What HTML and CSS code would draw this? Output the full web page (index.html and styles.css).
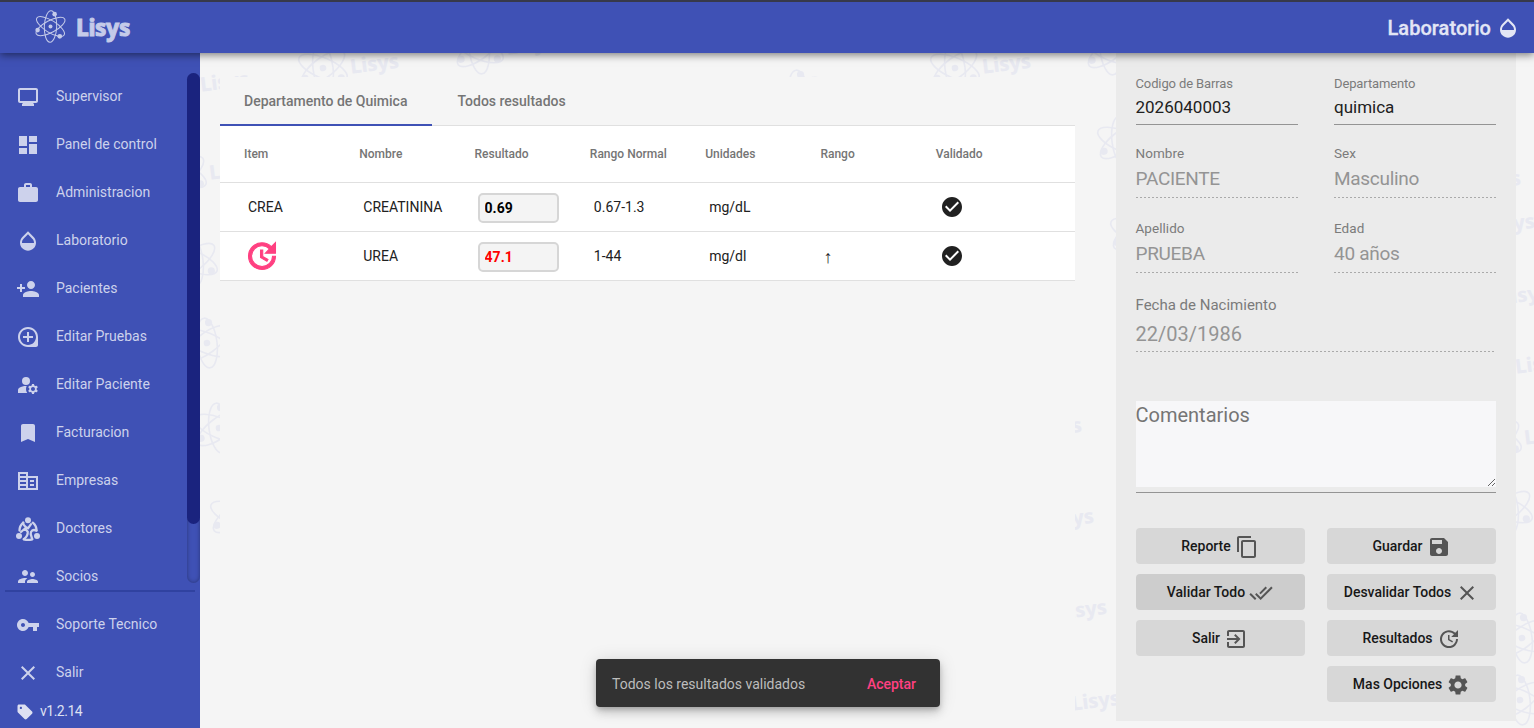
FILE: index.html
```html
<!DOCTYPE html>
<html lang="es">
<head>
<meta charset="utf-8">
<title>Lisys - Laboratorio</title>
<link rel="stylesheet" href="styles.css">
</head>
<body>
<svg class="defs" width="0" height="0" aria-hidden="true">
  <symbol id="atom" viewBox="-16 -16 32 32">
    <g fill="none" stroke="currentColor" stroke-width="1">
      <ellipse rx="6" ry="15.3" transform="rotate(2)"/>
      <ellipse rx="5.8" ry="15.6" transform="rotate(62)"/>
      <ellipse rx="5.8" ry="15.6" transform="rotate(-58)"/>
    </g>
    <g fill="currentColor"><circle r="1.9"/><circle cx="4" cy="-12" r="2.2"/><circle cx="-12.5" cy="3.5" r="2.2"/><circle cx="9" cy="9.5" r="2.3"/></g>
  </symbol>
  <symbol id="drop" viewBox="0 0 24 24"><path d="M17.66 8L12 2.35 6.34 8C4.78 9.56 4 11.64 4 13.64s.78 4.11 2.34 5.67 3.61 2.35 5.66 2.35 4.1-.79 5.66-2.35S20 15.64 20 13.64 19.22 9.56 17.66 8zM6 14c.01-2 .62-3.27 1.76-4.4L12 5.27l4.24 4.38C17.38 10.77 17.99 12 18 14H6z"/></symbol>
  <symbol id="close" viewBox="0 0 24 24"><path d="M19 6.41L17.59 5 12 10.59 6.41 5 5 6.41 10.59 12 5 17.59 6.41 19 12 13.41 17.59 19 19 17.59 13.41 12z"/></symbol>
  <symbol id="update" viewBox="0 0 24 24"><path d="M21 10.12h-6.78l2.74-2.82c-2.73-2.7-7.15-2.8-9.88-.1-2.73 2.71-2.73 7.08 0 9.79s7.15 2.71 9.88 0C18.32 15.65 19 14.08 19 12.1h2c0 1.98-.88 4.55-2.64 6.29-3.51 3.48-9.21 3.48-12.72 0-3.5-3.47-3.53-9.11-.02-12.58s9.14-3.47 12.65 0L21 3v7.12zM12.5 8v4.25l3.5 2.08-.72 1.21L11 13V8h1.5z"/></symbol>
  <symbol id="check" viewBox="0 0 24 24"><path d="M12 2C6.48 2 2 6.48 2 12s4.48 10 10 10 10-4.48 10-10S17.52 2 12 2zm-2 15l-5-5 1.41-1.41L10 14.17l7.59-7.59L19 8l-9 9z"/></symbol>
</svg>

<header class="topbar">
  <div class="brand"><svg class="brand-mark"><use href="#atom"/></svg><span class="brand-name">Lisys</span></div>
  <div class="section-title">Laboratorio<svg class="icon"><use href="#drop"/></svg></div>
</header>

<div class="shell">
  <nav class="sidebar">
    <div class="menu-scroll">
      <ul class="menu">
        <li><svg class="icon" viewBox="0 0 24 24"><path d="M20 3H4c-1.1 0-2 .9-2 2v11c0 1.1.9 2 2 2h3l-1 1v2h12v-2l-1-1h3c1.1 0 2-.9 2-2V5c0-1.1-.9-2-2-2zm0 13H4V5h16v11z"/></svg>Supervisor</li>
        <li><svg class="icon" viewBox="0 0 24 24"><path d="M3 13h8V3H3v10zm0 8h8v-6H3v6zm10 0h8V11h-8v10zm0-18v6h8V3h-8z"/></svg>Panel de control</li>
        <li><svg class="icon" viewBox="0 0 24 24"><path d="M20 6h-4V4c0-1.11-.89-2-2-2h-4c-1.11 0-2 .89-2 2v2H4c-1.11 0-1.99.89-1.99 2L2 19c0 1.11.89 2 2 2h16c1.11 0 2-.89 2-2V8c0-1.11-.89-2-2-2zm-6 0h-4V4h4v2z"/></svg>Administracion</li>
        <li><svg class="icon"><use href="#drop"/></svg>Laboratorio</li>
        <li><svg class="icon" viewBox="0 0 24 24"><path d="M15 12c2.21 0 4-1.79 4-4s-1.79-4-4-4-4 1.79-4 4 1.79 4 4 4zm-9-2V7H4v3H1v2h3v3h2v-3h3v-2H6zm9 4c-2.67 0-8 1.34-8 4v2h16v-2c0-2.66-5.33-4-8-4z"/></svg>Pacientes</li>
        <li><svg class="icon" viewBox="0 0 24 24"><path d="M13 7h-2v4H7v2h4v4h2v-4h4v-2h-4V7zm-1-5C6.49 2 2 6.49 2 12s4.49 10 10 10h8c1.1 0 2-.9 2-2v-8c0-5.51-4.49-10-10-10zm0 18c-4.41 0-8-3.59-8-8s3.59-8 8-8 8 3.59 8 8-3.59 8-8 8z"/></svg>Editar Pruebas</li>
        <li><svg class="icon" viewBox="0 0 24 24"><circle cx="10" cy="8" r="4"/><path d="M10.67 13.02c-.22-.01-.44-.02-.67-.02-2.42 0-4.68.67-6.61 1.82-.88.52-1.39 1.5-1.39 2.53V20h9.26c-.79-1.13-1.26-2.51-1.26-4 0-1.07.25-2.07.67-2.98zM20.75 16c0-.22-.03-.42-.06-.63l1.14-1.01-1-1.73-1.45.49c-.32-.27-.68-.48-1.08-.63L18 11h-2l-.3 1.49c-.4.15-.76.36-1.08.63l-1.45-.49-1 1.73 1.14 1.01c-.03.21-.06.41-.06.63s.03.42.06.63l-1.14 1.01 1 1.73 1.45-.49c.32.27.68.48 1.08.63L16 21h2l.3-1.49c.4-.15.76-.36 1.08-.63l1.45.49 1-1.73-1.14-1.01c.03-.21.06-.41.06-.63zM17 18c-1.1 0-2-.9-2-2s.9-2 2-2 2 .9 2 2-.9 2-2 2z"/></svg>Editar Paciente</li>
        <li><svg class="icon" viewBox="0 0 24 24"><path d="M17 3H7c-1.1 0-1.99.9-1.99 2L5 21l7-3 7 3V5c0-1.1-.9-2-2-2z"/></svg>Facturacion</li>
        <li><svg class="icon" viewBox="0 0 24 24"><path d="M12 7V3H2v18h20V7H12zM10 19H4v-2h6v2zM10 15H4v-2h6v2zM10 11H4V9h6v2zM10 7H4V5h6v2zM20 19h-8V9h8v10zM18 11h-4v2h4v-2zM18 15h-4v2h4v-2z"/></svg>Empresas</li>
        <li><svg class="icon" viewBox="0 0 24 24"><circle cx="12" cy="3.3" r="3"/><circle cx="3" cy="19" r="3"/><circle cx="21" cy="19" r="3"/><g fill="none" stroke="currentColor" stroke-width="2.3" stroke-linecap="round" stroke-linejoin="round"><path d="M7.2 5.7C4.6 8 3.5 10.6 3.5 13.6M16.8 5.7C19.6 8 20.5 10.6 20.5 13.6M7.8 22.2c1.6.7 2.8.8 4.2.8M16.2 22.2c-1.5.7-2.5.8-4.2.8"/><path d="M7.2 5.7c-.2 3 2.2 4.3 4.8 5.6l3-4.2M20.5 13.6c-3.5-1.6-6 .2-5.8 3.6l1.5 5M5 15l4-3.5 2.7 3.2c.3 3.2-1 5.5-3.9 7.5"/></g></svg>Doctores</li>
        <li><svg class="icon" viewBox="0 0 24 24"><path d="M16.5 12c1.38 0 2.49-1.12 2.49-2.5S17.88 7 16.5 7C15.12 7 14 8.12 14 9.5s1.12 2.5 2.5 2.5zM9 11c1.66 0 2.99-1.34 2.99-3S10.66 5 9 5C7.34 5 6 6.34 6 8s1.34 3 3 3zm7.5 3c-1.83 0-5.5.92-5.5 2.75V19h11v-2.25c0-1.83-3.67-2.75-5.5-2.75zM9 13c-2.33 0-7 1.17-7 3.5V19h7v-2.25c0-.85.33-2.34 2.37-3.47C10.5 13.1 9.66 13 9 13z"/></svg>Socios</li>
      </ul>
      <div class="scroll-track"><div class="scroll-thumb"></div></div>
    </div>
    <hr class="menu-rule">
    <ul class="menu menu-bottom">
      <li><svg class="icon" viewBox="0 0 24 24"><path d="M12.65 10C11.83 7.67 9.61 6 7 6c-3.31 0-6 2.69-6 6s2.69 6 6 6c2.61 0 4.83-1.67 5.65-4H17v4h4v-4h2v-4H12.65zM7 14c-1.1 0-2-.9-2-2s.9-2 2-2 2 .9 2 2-.9 2-2 2z"/></svg>Soporte Tecnico</li>
      <li><svg class="icon"><use href="#close"/></svg>Salir</li>
    </ul>
    <div class="version"><svg viewBox="0 0 24 24"><path d="M21.41 11.41l-8.83-8.83c-.37-.37-.88-.58-1.41-.58H4c-1.1 0-2 .9-2 2v7.17c0 .53.21 1.04.59 1.41l8.83 8.83c.78.78 2.05.78 2.83 0l7.17-7.17c.78-.78.78-2.04-.01-2.83zM6.5 8C5.67 8 5 7.33 5 6.5S5.67 5 6.5 5 8 5.67 8 6.5 7.33 8 6.5 8z"/></svg>v1.2.14</div>
  </nav>

  <main class="workspace">
    <svg class="watermark" viewBox="200 53 1334 675" aria-hidden="true">
      <g transform="translate(293 38)">
        <g id="stamp">
          <g transform="translate(30 30) rotate(-7)">
            <g fill="none" stroke="currentColor" stroke-width="1.6">
              <ellipse rx="10" ry="25"/><ellipse rx="10" ry="26" transform="rotate(60)"/><ellipse rx="10" ry="26" transform="rotate(-60)"/>
            </g>
            <g fill="currentColor"><circle r="3.3"/><circle cx="4" cy="-20" r="3.6"/><circle cx="-19" cy="8" r="3.6"/><circle cx="17" cy="12" r="3.6"/></g>
            <text class="stamp-text" x="27" y="9">Lisys</text>
          </g>
        </g>
      </g>
      <use href="#stamp" x="143" y="56"/>
      <use href="#stamp" x="152" y="144"/>
      <use href="#stamp" x="163" y="231"/>
      <use href="#stamp" x="177" y="313"/>
      <use href="#stamp" x="189" y="398"/>
      <use href="#stamp" x="205" y="485"/>
      <use href="#stamp" x="449" y="19"/>
      <use href="#stamp" x="769" y="65"/>
      <use href="#stamp" x="925" y="38"/>
      <use href="#stamp" x="1080" y="20"/>
      <use href="#stamp" x="1092" y="111"/>
      <use href="#stamp" x="1105" y="202"/>
      <use href="#stamp" x="976" y="402"/>
      <use href="#stamp" x="988" y="493"/>
      <use href="#stamp" x="1001" y="584"/>
      <use href="#stamp" x="1014" y="675"/>
      <use href="#stamp" x="1415" y="155"/>
      <use href="#stamp" x="1429" y="198"/>
      <use href="#stamp" x="1443" y="269"/>
      <use href="#stamp" x="1458" y="338"/>
      <use href="#stamp" x="1467" y="409"/>
      <use href="#stamp" x="1478" y="479"/>
      <use href="#stamp" x="1492" y="608"/>
      <use href="#stamp" x="1490" y="670"/>
    </svg>

    <section class="results">
      <div class="tabs"><div class="tab active">Departamento de Quimica</div><div class="tab">Todos resultados</div></div>
      <div class="table">
        <div class="row head"><span>Item</span><span>Nombre</span><span>Resultado</span><span>Rango Normal</span><span>Unidades</span><span>Rango</span><span>Validado</span></div>
        <div class="row"><span>CREA</span><span>CREATININA</span><span><input class="result" value="0.69"></span><span>0.67-1.3</span><span>mg/dL</span><span></span><span><svg class="icon"><use href="#check"/></svg></span></div>
        <div class="row"><span><svg class="repeat"><use href="#update"/></svg></span><span>UREA</span><span><input class="result high" value="47.1"></span><span>1-44</span><span>mg/dl</span><span class="arrow">↑</span><span><svg class="icon"><use href="#check"/></svg></span></div>
      </div>
    </section>

    <aside class="panel">
      <div class="fields">
        <div class="field"><label>Codigo de Barras</label><div class="value">2026040003</div></div>
        <div class="field"><label>Departamento</label><div class="value">quimica</div></div>
        <div class="field locked"><label>Nombre</label><div class="value">PACIENTE</div></div>
        <div class="field locked"><label>Sex</label><div class="value">Masculino</div></div>
        <div class="field locked"><label>Apellido</label><div class="value">PRUEBA</div></div>
        <div class="field locked"><label>Edad</label><div class="value">40 años</div></div>
        <div class="field locked wide"><label>Fecha de Nacimiento</label><div class="value">22/03/1986</div></div>
      </div>
      <div class="comments"><textarea placeholder="Comentarios"></textarea></div>
      <div class="actions">
        <button>Reporte<svg class="icon" viewBox="0 0 24 24"><path d="M16 1H4c-1.1 0-2 .9-2 2v14h2V3h12V1zm3 4H8c-1.1 0-2 .9-2 2v14c0 1.1.9 2 2 2h11c1.1 0 2-.9 2-2V7c0-1.1-.9-2-2-2zm0 16H8V7h11v14z"/></svg></button>
        <button>Guardar<svg class="icon" viewBox="0 0 24 24"><path d="M17 3H5c-1.11 0-2 .9-2 2v14c0 1.1.89 2 2 2h14c1.1 0 2-.9 2-2V7l-4-4zm-5 16c-1.66 0-3-1.34-3-3s1.34-3 3-3 3 1.34 3 3-1.34 3-3 3zm3-10H5V5h10v4z"/></svg></button>
        <button class="focused">Validar Todo<svg class="icon" viewBox="0 0 24 24"><path d="M18 7l-1.41-1.41-6.34 6.34 1.41 1.41L18 7zm4.24-1.41L11.66 16.17 7.48 12l-1.41 1.41L11.66 19l12-12-1.42-1.41zM.41 13.41L6 19l1.41-1.41L1.83 12 .41 13.41z"/></svg></button>
        <button>Desvalidar Todos<svg class="icon"><use href="#close"/></svg></button>
        <button>Salir<svg class="icon" viewBox="0 0 24 24"><path d="M10.09 15.59L11.5 17l5-5-5-5-1.41 1.41L12.67 11H3v2h9.67l-2.58 2.59zM19 3H5c-1.11 0-2 .9-2 2v4h2V5h14v14H5v-4H3v4c0 1.1.89 2 2 2h14c1.1 0 2-.9 2-2V5c0-1.1-.9-2-2-2z"/></svg></button>
        <button>Resultados<svg class="icon"><use href="#update"/></svg></button>
        <button class="last">Mas Opciones<svg class="icon" viewBox="0 0 24 24"><path d="M19.14 12.94c.04-.3.06-.61.06-.94 0-.32-.02-.64-.07-.94l2.03-1.58c.18-.14.23-.41.12-.61l-1.92-3.32c-.12-.22-.37-.29-.59-.22l-2.39.96c-.5-.38-1.03-.7-1.62-.94l-.36-2.54c-.04-.24-.24-.41-.48-.41h-3.84c-.24 0-.43.17-.47.41l-.36 2.54c-.59.24-1.13.57-1.62.94l-2.39-.96c-.22-.08-.47 0-.59.22L2.74 8.87c-.12.21-.08.47.12.61l2.03 1.58c-.05.3-.09.63-.09.94s.02.64.07.94l-2.03 1.58c-.18.14-.23.41-.12.61l1.92 3.32c.12.22.37.29.59.22l2.39-.96c.5.38 1.03.7 1.62.94l.36 2.54c.05.24.24.41.48.41h3.84c.24 0 .44-.17.47-.41l.36-2.54c.59-.24 1.13-.56 1.62-.94l2.39.96c.22.08.47 0 .59-.22l1.92-3.32c.12-.22.07-.47-.12-.61l-2.01-1.58zM12 15.6c-1.98 0-3.6-1.62-3.6-3.6s1.62-3.6 3.6-3.6 3.6 1.62 3.6 3.6-1.62 3.6-3.6 3.6z"/></svg></button>
      </div>
    </aside>
  </main>
</div>

<div class="snackbar"><span>Todos los resultados validados</span><span class="snack-action">Aceptar</span></div>
</body>
</html>
```
FILE: styles.css
```css
* { box-sizing: border-box; }
body {
  margin: 0;
  height: 728px;
  overflow: hidden;
  display: flex;
  flex-direction: column;
  background: #f5f5f5;
  color: #212121;
  font: 14px Roboto, sans-serif;
}
.defs { position: absolute; }
svg { display: block; fill: currentColor; flex: none; }
.icon { width: 24px; height: 24px; }

.topbar {
  position: relative;
  z-index: 2;
  height: 53px;
  flex: none;
  display: flex;
  justify-content: space-between;
  align-items: center;
  padding: 0 14px 0 34px;
  border-top: 2px solid #37394a;
  background: #3f51b5;
  box-shadow: 0 2px 8px rgba(0, 0, 0, .5);
}
.brand { display: flex; align-items: center; gap: 9px; color: #c5cbe9; }
.brand-mark { width: 33px; height: 33px; margin-top: -2px; }
.brand-name {
  font: 800 22.5px/30px "Noto Sans", sans-serif;
  letter-spacing: -.4px;
  -webkit-text-stroke: .9px #c5cbe9;
}
.section-title {
  display: flex;
  align-items: center;
  gap: 5px;
  font-size: 20px;
  font-weight: 500;
  color: #e3e6f5;
  letter-spacing: .05px;
  -webkit-text-stroke: .3px #e3e6f5;
}

.shell { flex: 1; min-height: 0; display: flex; }
.sidebar { width: 200px; flex: none; padding-top: 20px; background: #3f51b5; color: #cdd2ec; }
.menu-scroll { height: 510px; overflow: hidden; display: flex; justify-content: space-between; }
.menu { list-style: none; margin: 0; padding: 0; }
.menu li { height: 48px; display: flex; align-items: center; gap: 16px; padding: 0 0 2px 16px; white-space: nowrap; }
.menu li .icon { margin-top: 2px; }
.scroll-track { width: 13px; height: 510px; border-radius: 7px; box-shadow: inset 0 0 4px rgba(0, 0, 0, .35); }
.scroll-thumb { height: 451px; border-radius: 7px; background: #1a237e; }
.menu-rule { margin: 7px 5px 0; border: 0; border-top: 2px solid #3042a0; height: 0; }
.menu-bottom { padding-top: 8px; }
.menu-bottom li { padding-bottom: 1px; }
.version { display: flex; align-items: center; gap: 6px; padding: 5px 0 0 16px; color: #dde0f2; letter-spacing: -.5px; }
.version svg { width: 18px; height: 18px; margin-top: 2px; }

.workspace { position: relative; flex: 1; display: flex; justify-content: space-between; padding: 0 18px 7px 20px; }
.watermark { position: absolute; inset: 0; width: 1334px; height: 675px; color: #e8e9f1; }
.stamp-text { font: 800 20px "Noto Sans", sans-serif; letter-spacing: -.2px; }

.results { position: relative; width: 855px; margin-top: 24px; background: #f5f5f5; height: 651px; }
.tabs { display: flex; height: 49px; border-bottom: 1px solid #e0e0e0; }
.tab { height: 48px; padding: 0 25.5px; display: flex; align-items: center; font-weight: 500; color: #757575; }
.tab.active { width: 212px; height: 49px; padding: 1px 0 0 24px; border-bottom: 2px solid #3f51b5; }
.row {
  height: 49px;
  display: grid;
  grid-template-columns: repeat(7, 1fr);
  align-items: center;
  padding: 0 24px;
  background: #fff;
  border-bottom: 1px solid #e0e0e0;
}
.row > span { padding-left: 4px; }
.row.head { height: 57px; font-size: 12px; font-weight: 500; color: #757575; }
.row.head > span { padding-left: 0; }
.result {
  display: block;
  width: 81px;
  height: 30px;
  margin: 1px 0 0 -1px;
  padding: 1px 5px 0;
  border: 2px solid #d6d6d6;
  border-radius: 5px;
  background: #f4f4f4;
  color: #000;
  font: 700 14px Roboto, sans-serif;
}
.result.high { color: #f00; }
.arrow { font: 18px "Liberation Sans", sans-serif; margin-left: -1px; padding-top: 2px; }
.repeat { width: 36px; height: 36px; margin-left: -4px; color: #ff4081; stroke: #ff4081; stroke-width: .7px; }

.panel { position: relative; width: 400px; background: #ebebeb; padding: 17px 20px 0 19.5px; }
.fields { display: grid; grid-template-columns: 162.5px 162px; column-gap: 36px; grid-template-rows: 55px 73px 75px 79px; }
.field { display: flex; flex-direction: column; justify-content: flex-end; border-bottom: 1px solid #949494; color: #212121; }
.field label { font-size: 13px; line-height: 16px; color: #7b7b7b; letter-spacing: -.12px; }
.value { font-size: 17px; line-height: 22px; letter-spacing: 0; padding: 4px 0 6px; }
.field.locked { border-bottom: 0; color: #949494; background: repeating-linear-gradient(90deg, #aaa 0 2px, transparent 2px 4px) left bottom / 100% 1px no-repeat; }
.field.locked label { font-size: 13.5px; letter-spacing: .05px; }
.locked .value { font-size: 19px; padding: 7px 0 8px; letter-spacing: -.3px; }
.field.wide { grid-column: 1 / 3; }
.field.wide label { font-size: 15px; letter-spacing: 0; }
.field.wide .value { font-size: 20px; padding: 10px 0 7px; letter-spacing: 0; }
.comments { margin-top: 49px; height: 92px; border-bottom: 1px solid #949494; }
.comments textarea {
  display: block;
  width: 100%;
  height: 86px;
  padding: 2px 0;
  border: 0;
  background: #f7f7f9;
  font: 20px/24px Roboto, sans-serif;
}
.comments textarea::placeholder { color: #757575; }
.actions { margin-top: 35px; display: grid; grid-template-columns: 169px 169px; column-gap: 22.5px; row-gap: 10px; }
.actions button {
  height: 36px;
  display: flex;
  align-items: center;
  justify-content: center;
  gap: 4px;
  padding: 0;
  border: 0;
  border-radius: 4px;
  background: #d7d7d7;
  color: #181818;
  font: 500 14px Roboto, sans-serif;
}
.actions .icon { margin-top: 2px; color: #555; }
.actions .focused { background: #cdcdcd; }
.actions .last { grid-column: 2; }

.snackbar {
  position: absolute;
  z-index: 3;
  left: 596px;
  top: 659px;
  width: 344px;
  height: 48px;
  display: flex;
  align-items: center;
  justify-content: space-between;
  padding: 2px 24px 0 16px;
  border-radius: 4px;
  background: #323232;
  color: #bdbdbd;
  box-shadow: 0 3px 5px -1px rgba(0, 0, 0, .2), 0 6px 10px rgba(0, 0, 0, .14), 0 1px 18px rgba(0, 0, 0, .12);
}
.snack-action { color: #ff4081; font-weight: 500; }
```
